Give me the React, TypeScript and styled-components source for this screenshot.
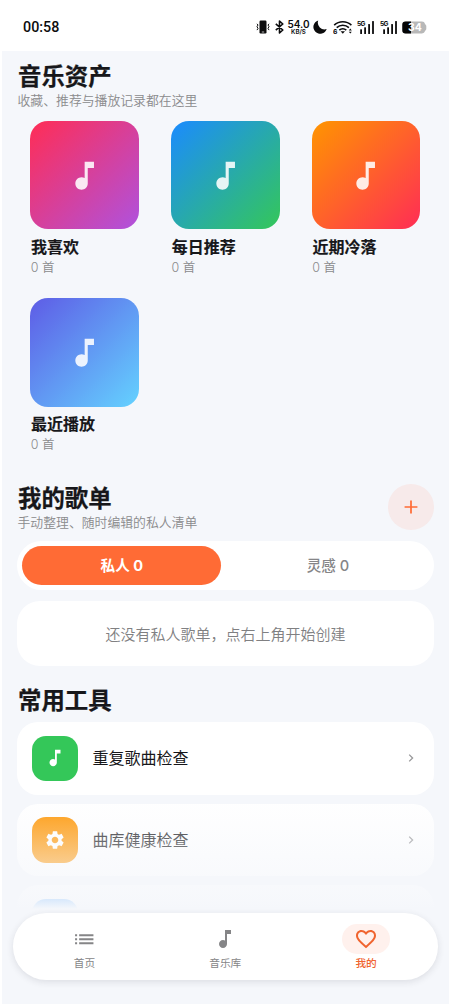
import React from 'react';
import styled, { createGlobalStyle } from 'styled-components';

const ACCENT = '#ff6b35';
const PAGE = '#f5f7fb';

const GlobalStyle = createGlobalStyle`
  * { box-sizing: border-box; }
  body {
    margin: 0;
    background: #fff;
    font-family: Inter, 'Noto Sans CJK SC', sans-serif;
    color: #17171a;
  }
  h2, p { margin: 0; }
  button { border: 0; padding: 0; font: inherit; color: inherit; background: none; }
  svg { display: block; flex: none; }
`;

const Phone = styled.div`
  position: relative;
  width: 450px;
  height: 1005px;
  overflow: hidden;
  background: #fff;
`;

const StatusBar = styled.header`
  display: flex;
  align-items: center;
  height: 51px;
  padding: 3px 23px 0 23px;
  color: #0c0c0d;
`;

const Clock = styled.time`
  flex: 1;
  font: 500 14.3px/16px Roboto, sans-serif;
`;

const StatusIcons = styled.div`
  display: flex;
  align-items: center;
`;

const StatusItem = styled.div<{ $gap: number }>`
  margin-left: ${(p) => p.$gap}px;
`;

const Speed = styled.div`
  display: flex;
  flex-direction: column;
  align-items: center;
  width: 21px;
  font: 600 10px/8px Inter, sans-serif;
  white-space: nowrap;

  small {
    margin-top: 1px;
    font: 600 6.2px/6px Inter, sans-serif;
  }
`;

const Content = styled.main`
  height: 953px;
  margin: 0 1px 0 2px;
  padding: 12px 15.5px 0 16px;
  overflow: hidden;
  background: ${PAGE};
`;

const SectionHeader = styled.div<{ $top?: number; $height?: number }>`
  display: flex;
  align-items: flex-start;
  justify-content: space-between;
  margin-top: ${(p) => p.$top ?? 0}px;
  height: ${(p) => p.$height ?? 46}px;
`;

const Heading = styled.div<{ $inset?: number }>`
  padding-top: ${(p) => p.$inset ?? 0}px;
`;

const SectionTitle = styled.h2`
  font-size: 23.4px;
  font-weight: 700;
  line-height: 27px;
  -webkit-text-stroke: 0.25px currentColor;
`;

const Subtitle = styled.p`
  margin: 0.5px 0 0 -0.5px;
  font-size: 12.85px;
  line-height: 20px;
  font-weight: 350;
  color: #8a8a8c;
`;

const AssetGrid = styled.div`
  display: grid;
  grid-template-columns: repeat(3, 108.5px);
  column-gap: 32.3px;
  row-gap: 20px;
  margin-top: 12px;
  padding-left: 12.3px;
`;

const Asset = styled.article`
  height: 157.3px;
`;

const Cover = styled.div<{ $from: string; $to: string }>`
  display: flex;
  align-items: center;
  justify-content: center;
  height: 108.3px;
  border-radius: 18px;
  color: rgba(255, 255, 255, 0.88);
  background: linear-gradient(135deg, ${(p) => p.$from}, ${(p) => p.$to});
`;

const AssetName = styled.div`
  margin: 6.7px 0 0 0.6px;
  font-size: 16px;
  font-weight: 700;
  line-height: 22px;
  -webkit-text-stroke: 0.15px currentColor;
`;

const AssetCount = styled.div`
  margin-left: 0.4px;
  padding-top: 1px;
  font-size: 12.5px;
  font-weight: 350;
  line-height: 18px;
  color: #8a8a8c;
`;

const AddButton = styled.button`
  display: flex;
  align-items: center;
  justify-content: center;
  width: 45.5px;
  height: 45.5px;
  border-radius: 50%;
  color: ${ACCENT};
  background: #f7eaea;
`;

const Tabs = styled.div`
  display: flex;
  height: 49px;
  margin: 11px 0 0 -0.7px;
  padding: 5px;
  border-radius: 24.5px;
  background: #fff;
`;

const Tab = styled.button<{ $active?: boolean }>`
  flex: ${(p) => (p.$active ? '0 0 199px' : '1')};
  margin-left: ${(p) => (p.$active ? 0 : 6)}px;
  padding-top: 1.5px;
  border-radius: 20px;
  font-size: 14.6px;
  font-weight: ${(p) => (p.$active ? 700 : 500)};
  line-height: 20px;
  color: ${(p) => (p.$active ? '#fff' : '#858587')};
  background: ${(p) => (p.$active ? ACCENT : 'transparent')};
`;

const EmptyCard = styled.div`
  display: flex;
  align-items: center;
  justify-content: center;
  height: 64.5px;
  margin: 11px 0 0 -0.7px;
  border-radius: 23px;
  background: #fff;
  font-size: 15px;
  font-weight: 350;
  color: #808082;
`;

const ToolList = styled.div`
  display: flex;
  flex-direction: column;
  gap: 9px;
  margin: 9.5px 0 0 -0.7px;
`;

const ToolRow = styled.div`
  display: flex;
  align-items: center;
  height: 72.7px;
  padding: 0 16px 0 14.7px;
  border-radius: 21px;
  background: #fff;
`;

const ToolIcon = styled.div<{ $color: string }>`
  display: flex;
  align-items: center;
  justify-content: center;
  width: 45.5px;
  height: 45.5px;
  border-radius: 14px;
  color: #fff;
  background: ${(p) => p.$color};
`;

const ToolName = styled.span`
  flex: 1;
  margin-left: 15px;
  font-size: 16px;
  line-height: 22px;
`;

const BottomFade = styled.div`
  position: absolute;
  left: 2px;
  right: 1px;
  top: 795px;
  bottom: 1px;
  background: linear-gradient(rgba(245, 247, 251, 0), rgba(245, 247, 251, 0.86) 104px, ${PAGE} 114px);
`;

const NavBar = styled.nav`
  position: absolute;
  left: 13px;
  right: 12.5px;
  top: 913px;
  display: flex;
  height: 66.5px;
  padding: 0 1px;
  border-radius: 33.25px;
  background: #fff;
  box-shadow: 0 2px 7px rgba(40, 40, 60, 0.12);
`;

const NavItem = styled.a<{ $active?: boolean }>`
  display: flex;
  flex: 1;
  flex-direction: column;
  align-items: center;
  padding-top: 11px;
  font-size: 10.7px;
  font-weight: ${(p) => (p.$active ? 500 : 400)};
  line-height: 20px;
  color: ${(p) => (p.$active ? '#f0642f' : '#858587')};
`;

const NavIcon = styled.span<{ $active?: boolean }>`
  display: flex;
  align-items: center;
  justify-content: center;
  width: 47.5px;
  height: 30px;
  border-radius: 15px;
  background: ${(p) => (p.$active ? '#fff1ed' : 'transparent')};
`;

const MaterialIcon = ({ size, d }: { size: number; d: string }) => (
  <svg width={size} height={size} viewBox="0 0 24 24" fill="currentColor">
    <path d={d} />
  </svg>
);

const NOTE = 'M12 3v10.55c-.59-.34-1.27-.55-2-.55-2.21 0-4 1.79-4 4s1.79 4 4 4 4-1.79 4-4V7h4V3h-6z';
const PLUS = 'M19 12.95h-6.05V19h-1.9v-6.05H5v-1.9h6.05V5h1.9v6.05H19z';
const LIST = 'M3 13h2v-2H3v2zm0 4h2v-2H3v2zm0-8h2V7H3v2zm4 4h14v-2H7v2zm0 4h14v-2H7v2zM7 7v2h14V7H7z';
const GEAR =
  'M19.14 12.94c.04-.3.06-.61.06-.94 0-.32-.02-.64-.07-.94l2.03-1.58c.18-.14.23-.41.12-.61l-1.92-3.32c-.12-.22-.37-.29-.59-.22l-2.39.96c-.5-.38-1.03-.7-1.62-.94l-.36-2.54c-.04-.24-.24-.41-.48-.41h-3.84c-.24 0-.43.17-.47.41l-.36 2.54c-.59.24-1.13.57-1.62.94l-2.39-.96c-.22-.08-.47 0-.59.22L2.74 8.87c-.12.21-.08.47.12.61l2.03 1.58c-.05.3-.09.63-.09.94s.02.64.07.94l-2.03 1.58c-.18.14-.23.41-.12.61l1.92 3.32c.12.22.37.29.59.22l2.39-.96c.5.38 1.03.7 1.62.94l.36 2.54c.05.24.24.41.48.41h3.84c.24 0 .44-.17.47-.41l.36-2.54c.59-.24 1.13-.56 1.62-.94l2.39.96c.22.08.47 0 .59-.22l1.92-3.32c.12-.22.07-.47-.12-.61l-2.01-1.58zM12 15.6c-1.98 0-3.6-1.62-3.6-3.6s1.62-3.6 3.6-3.6 3.6 1.62 3.6 3.6-1.62 3.6-3.6 3.6z';
const HEART =
  'M16.5 3c-1.74 0-3.41.81-4.5 2.09C10.91 3.81 9.24 3 7.5 3 4.42 3 2 5.42 2 8.5c0 3.78 3.4 6.86 8.55 11.54L12 21.35l1.45-1.32C18.6 15.36 22 12.28 22 8.5 22 5.42 19.58 3 16.5 3zm-4.4 15.55l-.1.1-.1-.1C7.14 14.24 4 11.39 4 8.5 4 6.5 5.5 5 7.5 5c1.54 0 3.04.99 4.5 2.9C13.46 5.99 14.96 5 16.5 5c2 0 3.5 1.5 3.5 3.5 0 2.89-3.14 5.74-7.9 10.05z';

const VibrateIcon = () => (
  <svg width="14" height="14" viewBox="0 0 14 14" fill="none" stroke="currentColor" strokeWidth="1">
    <rect x="3.5" y=".5" width="7" height="13" rx="1.2" fill="currentColor" stroke="none" />
    <path d="M5.8 12h2.4" stroke="#fff" strokeWidth=".7" />
    <path d="M1 3.8l1 1.2-1 1.7 1 1.7-1 1.7M13 3.8l-1 1.2 1 1.7-1 1.7 1 1.7" />
  </svg>
);

const BluetoothIcon = () => (
  <svg width="9" height="14" viewBox="0 0 9 14" fill="none" stroke="currentColor" strokeWidth="1.6" strokeLinejoin="round">
    <path d="M.8 3.8 7.8 10 4.5 13V1l3.3 3L.8 10.2" />
  </svg>
);

const MoonIcon = () => (
  <svg width="14" height="14" viewBox="0 0 14 14" fill="currentColor">
    <path d="M5.2.5A6.8 6.8 0 1 0 13.7 9 6.7 6.7 0 0 1 5.2.5z" />
  </svg>
);

const WifiIcon = () => (
  <svg width="20" height="15" viewBox="0 0 20 15" fill="none" stroke="currentColor" strokeWidth="1.6">
    <path d="M1.2 5.1a12.6 12.6 0 0 1 17.2 0M3.7 7.7a9 9 0 0 1 12.2 0M6.3 10.2a5.3 5.3 0 0 1 7 0" />
    <path d="M7.6 11.2h4.4l-2.2 2.5z" fill="currentColor" stroke="none" />
    <path d="m15.8 10.5 1.5-1.9 1.5 1.9zM15.8 11.7l1.5 1.9 1.5-1.9z" fill="currentColor" stroke="none" />
    <text x="0" y="14" fontFamily="Inter, sans-serif" fontSize="6.8" fontWeight="700" fill="currentColor" stroke="none">6</text>
  </svg>
);

const SignalIcon = () => (
  <svg width="18" height="15" viewBox="0 0 18 15" fill="currentColor">
    <text x="0" y="5.7" fontFamily="Inter, sans-serif" fontSize="6.6" fontWeight="700" textLength="8.5">5G</text>
    <rect x="3.2" y="9.3" width="1.8" height="4.7" rx=".5" />
    <rect x="7.2" y="7.3" width="1.8" height="6.7" rx=".5" />
    <rect x="11.2" y="4" width="1.8" height="10" rx=".5" />
    <rect x="15.1" y="1" width="1.8" height="13" rx=".5" />
  </svg>
);

const BatteryIcon = () => (
  <svg width="25" height="13" viewBox="0 0 25 13">
    <path d="M3.6.5h16.2a3.3 3.3 0 0 1 3.3 2.4l1.2 1.9v3.4l-1.2 1.9a3.3 3.3 0 0 1-3.3 2.4H3.6A3.3 3.3 0 0 1 .3 9.2V3.8A3.3 3.3 0 0 1 3.6.5z" fill="#b8b8b8" />
    <path d="M9 .5H3.6A3.3 3.3 0 0 0 .3 3.8v5.4a3.3 3.3 0 0 0 3.3 3.3H9z" fill="#050505" />
    <text x="12.8" y="10.2" textAnchor="middle" fontFamily="Inter, sans-serif" fontSize="10.4" fontWeight="700" fill="#fff">34</text>
  </svg>
);

const Chevron = () => (
  <svg width="14" height="14" viewBox="0 0 14 14" fill="none" stroke="#98989a" strokeWidth="1.3">
    <path d="m5.2 3.6 3.4 3.4-3.4 3.4" />
  </svg>
);

const assets = [
  { name: '我喜欢', from: '#ff2d55', to: '#af52de' },
  { name: '每日推荐', from: '#1b8bff', to: '#34c759' },
  { name: '近期冷落', from: '#ff9500', to: '#ff2d55' },
  { name: '最近播放', from: '#5e5ce6', to: '#64d2ff' },
];

const tools = [
  { name: '重复歌曲检查', color: '#34c759', icon: NOTE },
  { name: '曲库健康检查', color: '#ff9500', icon: GEAR },
  { name: '', color: '#2490ff', icon: '' },
];

const navItems = [
  { label: '首页', icon: LIST, size: 24.5 },
  { label: '音乐库', icon: NOTE, size: 24 },
  { label: '我的', icon: HEART, size: 24, active: true },
];

export default function App() {
  return (
    <Phone>
      <GlobalStyle />
      <StatusBar>
        <Clock>00:58</Clock>
        <StatusIcons>
          <VibrateIcon />
          <StatusItem $gap={5}><BluetoothIcon /></StatusItem>
          <StatusItem $gap={4}><Speed><span>54.0</span><small>KB/S</small></Speed></StatusItem>
          <StatusItem $gap={4}><MoonIcon /></StatusItem>
          <StatusItem $gap={6}><WifiIcon /></StatusItem>
          <StatusItem $gap={4}><SignalIcon /></StatusItem>
          <StatusItem $gap={5}><SignalIcon /></StatusItem>
          <StatusItem $gap={4}><BatteryIcon /></StatusItem>
        </StatusIcons>
      </StatusBar>

      <Content>
        <SectionHeader>
          <Heading>
            <SectionTitle>音乐资产</SectionTitle>
            <Subtitle>收藏、推荐与播放记录都在这里</Subtitle>
          </Heading>
        </SectionHeader>
        <AssetGrid>
          {assets.map((a) => (
            <Asset key={a.name}>
              <Cover $from={a.from} $to={a.to}>
                <MaterialIcon size={37.3} d={NOTE} />
              </Cover>
              <AssetName>{a.name}</AssetName>
              <AssetCount>0 首</AssetCount>
            </Asset>
          ))}
        </AssetGrid>

        <SectionHeader $top={28.5}>
          <Heading $inset={1}>
            <SectionTitle>我的歌单</SectionTitle>
            <Subtitle>手动整理、随时编辑的私人清单</Subtitle>
          </Heading>
          <AddButton aria-label="新建歌单">
            <MaterialIcon size={22} d={PLUS} />
          </AddButton>
        </SectionHeader>
        <Tabs>
          <Tab $active>私人 0</Tab>
          <Tab>灵感 0</Tab>
        </Tabs>
        <EmptyCard>还没有私人歌单，点右上角开始创建</EmptyCard>

        <SectionHeader $top={21} $height={26}>
          <SectionTitle>常用工具</SectionTitle>
        </SectionHeader>
        <ToolList>
          {tools.map((t) => (
            <ToolRow key={t.color}>
              <ToolIcon $color={t.color}>
                <MaterialIcon size={22} d={t.icon} />
              </ToolIcon>
              <ToolName>{t.name}</ToolName>
              <Chevron />
            </ToolRow>
          ))}
        </ToolList>
      </Content>

      <BottomFade />
      <NavBar>
        {navItems.map((n) => (
          <NavItem key={n.label} $active={n.active}>
            <NavIcon $active={n.active}>
              <MaterialIcon size={n.size} d={n.icon} />
            </NavIcon>
            {n.label}
          </NavItem>
        ))}
      </NavBar>
    </Phone>
  );
}
